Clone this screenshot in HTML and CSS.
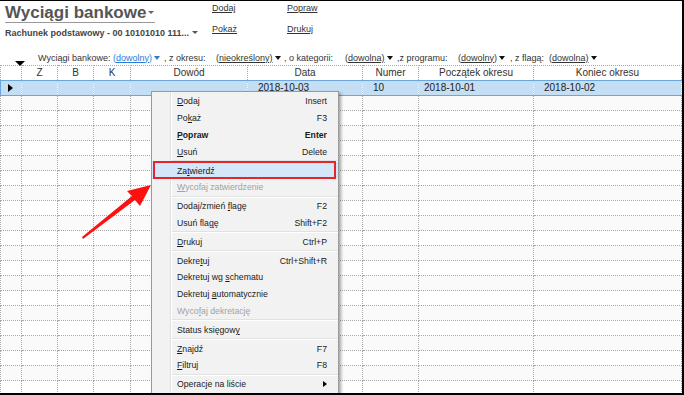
FILE: index.html
```html
<!DOCTYPE html>
<html lang="pl">
<head>
  <meta charset="UTF-8">
  <title>Wyciągi bankowe</title>
  <link rel="stylesheet" href="styles.css">
</head>
<body>
  <div class="screen">
    <div class="top">
      <div class="title-block">
        <div class="title">Wyciągi bankowe<i class="caret"></i></div>
        <div class="account">Rachunek podstawowy - 00 10101010 111... <i class="caret-s"></i></div>
      </div>
      <div class="actions">
        <a>Dodaj</a>
        <a>Popraw</a>
        <a>Pokaż</a>
        <a>Drukuj</a>
      </div>
    </div>

    <div class="filters">
      <div class="cell"><i class="tri-big"></i></div>
      <div class="cell">Wyciągi bankowe:</div>
      <div class="cell"><span class="dd blue">(dowolny)</span><i class="tri blue-tri"></i></div>
      <div class="cell">, z okresu:</div>
      <div class="cell"><span class="dd">(nieokreślony)</span><i class="tri"></i></div>
      <div class="cell">, o kategorii:</div>
      <div class="cell"><span class="dd">(dowolna)</span><i class="tri"></i></div>
      <div class="cell">,z programu:</div>
      <div class="cell"><span class="dd">(dowolny)</span><i class="tri"></i></div>
      <div class="cell">, z flagą:</div>
      <div class="cell"><span class="dd">(dowolna)</span><i class="tri"></i></div>
    </div>

    <table class="grid">
      <colgroup>
        <col style="width:21px"><col style="width:36px"><col style="width:36px"><col style="width:37px">
        <col style="width:117px"><col style="width:115px"><col style="width:56px"><col style="width:115px"><col>
      </colgroup>
      <thead>
        <tr>
          <th></th><th>Z</th><th>B</th><th>K</th><th>Dowód</th><th>Data</th><th>Numer</th><th>Początek okresu</th><th>Koniec okresu</th>
        </tr>
      </thead>
      <tbody id="rows">
        <tr class="selected">
          <td><i class="row-mark"></i></td><td></td><td></td><td></td><td></td>
          <td class="pl10">2018-10-03</td><td class="pl10">10</td><td class="pl5">2018-10-01</td><td class="pl10">2018-10-02</td>
        </tr>
      </tbody>
    </table>

    <div class="menu">
      <div class="item"><span><u>D</u>odaj</span><span>Insert</span></div>
      <div class="item"><span>Po<u>k</u>aż</span><span>F3</span></div>
      <div class="item bold"><span><u>P</u>opraw</span><span>Enter</span></div>
      <div class="item"><span><u>U</u>suń</span><span>Delete</span></div>
      <div class="sep"></div>
      <div class="item hot"><span>Za<u>t</u>wierdź</span><span></span></div>
      <div class="item off"><span><u>W</u>ycofaj zatwierdzenie</span><span></span></div>
      <div class="sep"></div>
      <div class="item"><span>Dodaj/zmień <u>f</u>lagę</span><span>F2</span></div>
      <div class="item"><span>Usuń fla<u>g</u>ę</span><span>Shift+F2</span></div>
      <div class="sep"></div>
      <div class="item"><span><u>D</u>rukuj</span><span>Ctrl+P</span></div>
      <div class="sep"></div>
      <div class="item"><span>Dekre<u>t</u>uj</span><span>Ctrl+Shift+R</span></div>
      <div class="item"><span>Dekretuj wg <u>s</u>chematu</span><span></span></div>
      <div class="item"><span>Dekretuj <u>a</u>utomatycznie</span><span></span></div>
      <div class="item off"><span>Wyco<u>f</u>aj dekretację</span><span></span></div>
      <div class="sep"></div>
      <div class="item"><span>Status księgow<u>y</u></span><span></span></div>
      <div class="sep"></div>
      <div class="item"><span><u>Z</u>najdź</span><span>F7</span></div>
      <div class="item"><span><u>F</u>iltruj</span><span>F8</span></div>
      <div class="sep"></div>
      <div class="item"><span>Operacje na liście</span><i class="sub"></i></div>
    </div>

    <svg class="arrow" width="76" height="60" viewBox="0 0 76 60">
      <polygon points="2,54 52,13 47,8 71,2 60,23 55,17 3,56" fill="#ff1010"/>
    </svg>
  </div>

  <script>
    // empty rows of the grid
    var body = document.getElementById('rows');
    for (var i = 0; i < 20; i++) {
      var tr = document.createElement('tr');
      if (i % 2 === 0) tr.className = 'alt';
      for (var c = 0; c < 9; c++) tr.appendChild(document.createElement('td'));
      body.appendChild(tr);
    }
  </script>
</body>
</html>
```

FILE: styles.css
```css
body {
  margin: 0;
  font-family: "Liberation Sans", Arial, sans-serif;
}
.screen {
  position: relative;
  width: 682px;
  height: 392px;
  border-top: 1px solid #000;
  border-right: 2px solid #000;
  border-bottom: 2px solid #000;
  overflow: hidden;
  background: #fff;
  color: #333;
}
.top {
  display: flex;
  height: 40px;
}
.title-block {
  width: 212px;
  padding-left: 5px;
  box-sizing: border-box;
}
.title {
  display: inline-block;
  margin-top: 3px;
  font-size: 17px;
  font-weight: bold;
  line-height: 18px;
  color: #555;
  border-bottom: 1px solid #999;
  padding-right: 1px;
}
.caret {
  display: inline-block;
  margin-left: 2px;
  vertical-align: 4px;
  border-left: 3px solid transparent;
  border-right: 3px solid transparent;
  border-top: 3px solid #666;
}
.account {
  margin-top: 5px;
  font-size: 9px;
  font-weight: bold;
  line-height: 11px;
  color: #444;
}
.caret-s {
  display: inline-block;
  vertical-align: 2px;
  border-left: 3px solid transparent;
  border-right: 3px solid transparent;
  border-top: 3px solid #555;
}
.actions {
  display: grid;
  grid-template-columns: 75px 75px;
  row-gap: 2px;
  font-size: 9px;
  line-height: 14px;
}
.actions a {
  color: #333;
  text-decoration: underline;
}
.filters {
  display: grid;
  grid-template-columns: 23px 75px 51px 52px 68px 61px 52px 61px 52px 39px auto;
  height: 24px;
  padding: 10px 0 0 15px;
  box-sizing: border-box;
  font-size: 9px;
  line-height: 11px;
  color: #333;
  white-space: nowrap;
}
.cell {
  display: flex;
  align-items: center;
  gap: 2px;
}
.tri-big {
  align-self: flex-end;
  margin-bottom: -1px;
  border-left: 5px solid transparent;
  border-right: 5px solid transparent;
  border-top: 5px solid #000;
}
.dd {
  text-decoration: underline;
}
.blue {
  color: #2b7bd6;
}
.tri {
  border-left: 3px solid transparent;
  border-right: 3px solid transparent;
  border-top: 4px solid #111;
}
.blue-tri {
  border-top-color: #2b7bd6;
}

/* grid */
.grid {
  width: 682px;
  table-layout: fixed;
  border-collapse: collapse;
  font-size: 10px;
  color: #222;
}
.grid tr {
  height: 15px;
}
.grid th,
.grid td {
  padding: 0;
  height: 14px;
  line-height: 14px;
  border: 1px dotted #a8a8a8;
  white-space: nowrap;
  overflow: hidden;
}
.grid th {
  font-weight: normal;
  color: #333;
  text-align: center;
}
.grid tr.alt td {
  background: #fafafa;
}
.grid tr.selected td {
  background: #c4def4;
  border-top: 1px solid #6da6dd;
  border-bottom: 1px solid #6da6dd;
  border-left-color: #b7d2ea;
  border-right-color: #b7d2ea;
}
.grid tr.selected td:first-child {
  border-left: 1px solid #6da6dd;
}
.pl5 { padding-left: 5px !important; }
.pl10 { padding-left: 10px !important; }
.row-mark {
  display: block;
  margin-left: 7px;
  width: 0;
  border-top: 4px solid transparent;
  border-bottom: 4px solid transparent;
  border-left: 5px solid #000;
}

/* context menu */
.menu {
  position: absolute;
  left: 151px;
  top: 90px;
  width: 188px;
  height: 320px;
  box-sizing: border-box;
  padding-top: 1px;
  border: 1px solid #9a9a9a;
  background: linear-gradient(to right, #f2f2f2 18px, #e0e1e1 18px, #e0e1e1 19px, #fff 19px, #fff 20px, #f2f2f2 20px);
  box-shadow: 2px 2px 3px rgba(0, 0, 0, 0.35);
  font-size: 8.7px;
  color: #1a1a1a;
}
.item {
  position: relative;
  display: flex;
  align-items: center;
  justify-content: space-between;
  height: 16.8px;
  padding: 0 11px 0 25px;
}
.item u {
  text-decoration: underline;
}
.item.bold {
  font-weight: bold;
}
.item.off {
  color: #a2a2a2;
}
.item.hot {
  background: #d3e7f8;
}
.item.hot::after {
  content: "";
  position: absolute;
  top: -1px;
  left: 1px;
  right: 2px;
  bottom: 0;
  border: 2px solid #e3262c;
}
.sep {
  height: 2px;
  margin-left: 20px;
  background: linear-gradient(#e0e1e1 1px, #fff 1px);
}
.sub {
  border-top: 3px solid transparent;
  border-bottom: 3px solid transparent;
  border-left: 4px solid #000;
}
.arrow {
  position: absolute;
  left: 80px;
  top: 182px;
}
```
